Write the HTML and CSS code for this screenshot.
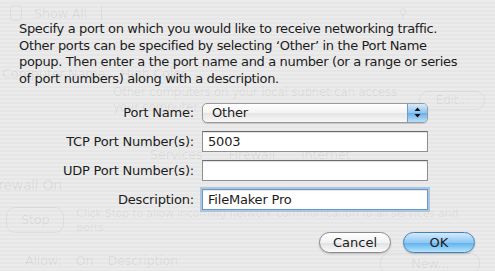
FILE: index.html
```html
<!DOCTYPE html>
<html lang="en">
<head>
  <meta charset="UTF-8">
  <title>Add Port</title>
  <link rel="stylesheet" href="styles.css">
</head>
<body>
  <div class="screen">
    <!-- the Sharing pane behind the sheet, faded out -->
    <div class="backdrop">
      <div class="ghost-toolbar">
        <span class="ghost-seg"></span>
        <span class="ghost-showall">Show All</span>
        <span class="ghost-search">&#9906;</span>
      </div>
      <div class="ghost-name">Computer Name: &nbsp; High Color</div>
      <div class="ghost-subnet">
        <div>
          <p>Other computers on your local subnet can access</p>
          <p>your computer at</p>
        </div>
        <span class="ghost-btn ghost-edit">Edit...</span>
      </div>
      <div class="ghost-tabs"><span>Services</span><span>Firewall</span><span>Internet</span></div>
      <div class="ghost-status">Firewall On</div>
      <div class="ghost-stop">
        <span class="ghost-btn">Stop</span>
        <p>Click Stop to allow incoming network communication to all services and<br>ports.</p>
      </div>
      <div class="ghost-list">
        <span>Allow:</span><span>On</span><span>Description</span>
        <span class="ghost-btn ghost-new">New...</span>
      </div>
    </div>

    <div class="sheet">
      <p class="message">Specify a port on which you would like to receive networking traffic.<br>Other ports can be specified by selecting &lsquo;Other&rsquo; in the Port Name<br>popup. Then enter a the port name and a number (or a range or series<br>of port numbers) along with a description.</p>

      <div class="form">
        <label>Port Name:</label>
        <div class="popup">
          <span class="popup-value">Other</span>
          <span class="popup-arrows">
            <svg width="7" height="11" viewBox="0 0 7 11"><path d="M3.5 0.5 L6.5 4 L0.5 4 Z M0.5 7 L6.5 7 L3.5 10.5 Z" fill="#111"/></svg>
          </span>
        </div>

        <label>TCP Port Number(s):</label>
        <div class="field">5003</div>

        <label>UDP Port Number(s):</label>
        <div class="field"></div>

        <label>Description:</label>
        <div class="field focused">FileMaker Pro</div>
      </div>

      <div class="buttons">
        <button class="btn">Cancel</button>
        <button class="btn default">OK</button>
      </div>
    </div>
  </div>
</body>
</html>
```

FILE: styles.css
```css
* {
  margin: 0;
  padding: 0;
  box-sizing: border-box;
}

body {
  font-family: 'DejaVu Sans', 'Liberation Sans', sans-serif;
  background: #e9e9e9;
  color: #1c1c1c;
}

.screen {
  position: relative;
  width: 495px;
  height: 271px;
  overflow: hidden;
  background: repeating-linear-gradient(180deg, #ebebeb 0, #ebebeb 2px, #e6e6e6 2px, #e6e6e6 4px);
}

/* faded window behind */
.backdrop {
  position: absolute;
  inset: 0;
  color: rgba(0, 0, 0, 0.07);
  font-size: 12px;
  line-height: 15px;
  letter-spacing: -0.3px;
  white-space: nowrap;
}

.ghost-toolbar {
  display: flex;
  align-items: center;
  height: 26px;
  padding-left: 10px;
  font-size: 13px;
}

.ghost-seg {
  width: 12px;
  height: 16px;
  border: 1px solid rgba(0, 0, 0, 0.05);
  border-radius: 3px;
  margin-right: 12px;
}

.ghost-showall {
  padding-right: 14px;
  border-right: 1px solid rgba(0, 0, 0, 0.05);
}

.ghost-search {
  margin-left: auto;
  margin-right: 88px;
  font-size: 12px;
}

.ghost-name {
  margin-top: 40px;
  padding-left: 2px;
  font-size: 13px;
}

.ghost-subnet {
  display: flex;
  align-items: flex-start;
  padding: 4px 0 0 113px;
}

.ghost-btn {
  border: 1px solid rgba(0, 0, 0, 0.05);
  border-radius: 9px;
  padding: 1px 16px;
}

.ghost-edit {
  margin: 6px 0 0 22px;
}

.ghost-tabs {
  display: flex;
  gap: 26px;
  padding: 32px 0 0 150px;
  font-size: 13px;
}

.ghost-status {
  margin: 16px 0 0 -12px;
  font-size: 14px;
}

.ghost-stop {
  display: flex;
  gap: 12px;
  padding: 14px 0 0 6px;
  line-height: 14px;
}

.ghost-stop p {
  font-size: 11px;
  letter-spacing: -0.2px;
}

.ghost-stop .ghost-btn {
  padding: 5px 14px;
  align-self: flex-start;
  font-size: 13px;
}

.ghost-list {
  display: flex;
  gap: 14px;
  padding: 18px 15px 0 25px;
  font-size: 13px;
}

.ghost-new {
  margin-left: auto;
  padding: 2px 30px;
}

/* the sheet */
.sheet {
  position: relative;
  padding: 21px 19px 0 19px;
}

.message {
  font-size: 13px;
  line-height: 16.7px;
  letter-spacing: -0.35px;
  white-space: nowrap;
}

.form {
  display: grid;
  grid-template-columns: 175px 226px;
  column-gap: 8px;
  row-gap: 8px;
  align-items: center;
  margin-top: 15px;
  font-size: 13px;
  letter-spacing: -0.2px;
}

.form label {
  text-align: right;
}

.popup {
  display: flex;
  align-items: center;
  height: 20px;
  border: 1px solid #9a9a9a;
  border-radius: 5px;
  background: linear-gradient(180deg, #ffffff 0%, #f3f3f3 50%, #e4e4e4 51%, #f8f8f8 100%);
  box-shadow: 0 1px 1px rgba(0, 0, 0, 0.15);
  overflow: hidden;
}

.popup-value {
  flex: 1;
  padding-left: 9px;
}

.popup-arrows {
  display: flex;
  align-items: center;
  justify-content: center;
  width: 20px;
  height: 100%;
  border-left: 1px solid #6f9bc6;
  background: linear-gradient(180deg, #d6eafb 0%, #8ec3ef 50%, #6aaee8 51%, #b9e0fb 100%);
}

.field {
  height: 21px;
  border: 1px solid #8f8f8f;
  border-top-color: #6a6a6a;
  background: #fff;
  padding: 2px 5px 0;
  box-shadow: inset 0 1px 1px rgba(0, 0, 0, 0.12);
}

.field.focused {
  border-color: #6c98c0;
  box-shadow: 0 0 0 2px #a9c7e2, inset 0 1px 1px rgba(0, 0, 0, 0.1);
}

.buttons {
  display: flex;
  justify-content: flex-end;
  gap: 12px;
  margin-top: 22px;
  padding-right: 1px;
}

.btn {
  width: 72px;
  height: 21px;
  border: 1px solid #8a8a8a;
  border-radius: 11px;
  font-family: 'DejaVu Sans', 'Liberation Sans', sans-serif;
  font-size: 13px;
  color: #1c1c1c;
  background: linear-gradient(180deg, #ffffff 0%, #f2f2f2 50%, #e0e0e0 51%, #fbfbfb 100%);
  box-shadow: 0 1px 2px rgba(0, 0, 0, 0.2);
}

.btn.default {
  border-color: #4b7fb4;
  background: linear-gradient(180deg, #d3ebfd 0%, #8fc8f4 50%, #5db0ec 51%, #b5e4fd 100%);
}
```
